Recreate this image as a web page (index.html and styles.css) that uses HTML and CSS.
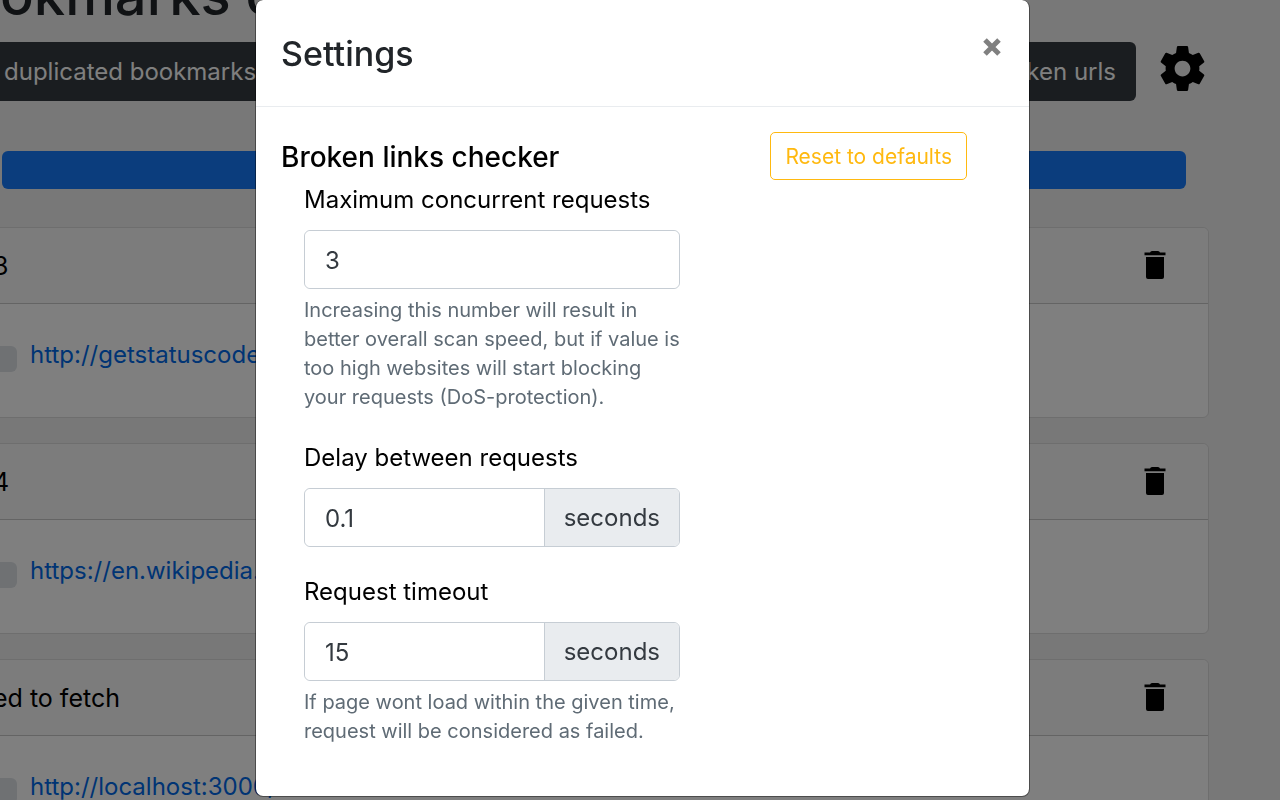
FILE: index.html
```html
<!DOCTYPE html>
<html lang="en">
<head>
<meta charset="utf-8">
<meta name="viewport" content="width=device-width, initial-scale=1">
<title>Settings</title>
<link rel="stylesheet" href="styles.css">
</head>
<body>
<svg class="symbols" aria-hidden="true">
  <symbol id="gear" viewBox="2 2 20 20"><path d="M19.43 12.98c.04-.32.07-.64.07-.98s-.03-.66-.07-.98l2.11-1.65c.19-.15.24-.42.12-.64l-2-3.46c-.12-.22-.39-.3-.61-.22l-2.49 1c-.52-.4-1.08-.73-1.69-.98l-.38-2.65C14.46 2.18 14.25 2 14 2h-4c-.25 0-.46.18-.49.42l-.38 2.65c-.61.25-1.17.59-1.69.98l-2.49-1c-.23-.09-.49 0-.61.22l-2 3.46c-.13.22-.07.49.12.64l2.11 1.65c-.04.32-.07.65-.07.98s.03.66.07.98l-2.11 1.65c-.19.15-.24.42-.12.64l2 3.46c.12.22.39.3.61.22l2.49-1c.52.4 1.08.73 1.69.98l.38 2.65c.03.24.24.42.49.42h4c.25 0 .46-.18.49-.42l.38-2.65c.61-.25 1.17-.59 1.69-.98l2.49 1c.23.09.49 0 .61-.22l2-3.46c.12-.22.07-.49-.12-.64l-2.11-1.65zM12 15.5c-1.93 0-3.5-1.57-3.5-3.5s1.57-3.5 3.5-3.5 3.500 1.570 3.500 3.500-1.570 3.500-3.500 3.500z"/></symbol>
  <symbol id="trash" viewBox="0 0 22 28"><path d="M6 1.500Q6.500 0 8 0H14Q15.500 0 16 1.500H21.500V4.300H.5V1.500zM2 6H20V26Q20 28 18 28H4Q2 28 2 26z"/></symbol>
</svg>
<main class="page">
  <h1 class="page-title">okmarks c</h1>
  <div class="toolbar">
    <div class="actions">
      <button type="button" class="action">duplicated bookmarks</button>
      <button type="button" class="action">broken urls</button>
    </div>
    <button type="button" class="icon-button" aria-label="Settings"><svg class="gear"><use href="#gear"/></svg></button>
  </div>
  <div class="progress" role="progressbar" aria-label="Scan progress" aria-valuenow="100"></div>
  <div class="results">
    <section class="card">
      <header class="card-header"><span>3</span><button type="button" class="icon-button" aria-label="Delete"><svg class="trash"><use href="#trash"/></svg></button></header>
      <div class="card-body"><span class="badge"></span><a class="link" href="#">http://getstatuscode</a></div>
    </section>
    <section class="card">
      <header class="card-header"><span>4</span><button type="button" class="icon-button" aria-label="Delete"><svg class="trash"><use href="#trash"/></svg></button></header>
      <div class="card-body"><span class="badge"></span><a class="link" href="#">https://en.wikipedia.</a></div>
    </section>
    <section class="card">
      <header class="card-header"><span>ed to fetch</span><button type="button" class="icon-button" aria-label="Delete"><svg class="trash"><use href="#trash"/></svg></button></header>
      <div class="card-body"><span class="badge"></span><a class="link" href="#">http://localhost:3000/</a></div>
    </section>
  </div>
</main>
<div class="backdrop">
  <div class="modal" role="dialog" aria-modal="true" aria-labelledby="settings-title">
    <header class="modal-header">
      <h2 class="modal-title" id="settings-title">Settings</h2>
      <button type="button" class="close" aria-label="Close"><svg class="close-icon" viewBox="0 0 18 18"><path d="M2 2 16 16M16 2 2 16"/></svg></button>
    </header>
    <form class="modal-body">
      <div class="fields">
        <h3 class="section-title">Broken links checker</h3>
        <div class="field">
          <label class="label" for="max">Maximum concurrent requests</label>
          <div class="group"><input class="input" id="max" type="text" value="3"></div>
          <p class="help">Increasing this number will result in<br>better overall scan speed, but if value is<br>too high websites will start blocking<br>your requests (DoS-protection).</p>
        </div>
        <div class="field">
          <label class="label" for="delay">Delay between requests</label>
          <div class="group"><input class="input" id="delay" type="text" value="0.1"><span class="unit">seconds</span></div>
        </div>
        <div class="field">
          <label class="label" for="timeout">Request timeout</label>
          <div class="group"><input class="input" id="timeout" type="text" value="15"><span class="unit">seconds</span></div>
          <p class="help">If page wont load within the given time,<br>request will be considered as failed.</p>
        </div>
      </div>
      <button type="button" class="reset">Reset to defaults</button>
    </form>
  </div>
</div>
</body>
</html>
```
FILE: styles.css
```css
* { box-sizing: border-box; }
body {
  margin: 0;
  height: 100vh;
  overflow: hidden;
  background: #f0f0f0;
  color: #000;
  font: 24px/38px Inter, "Liberation Sans", sans-serif;
}
button, input { font: inherit; color: inherit; }
button { border: 0; background: none; padding: 0; }
.symbols { display: none; }
svg { display: block; }

.page { height: 100vh; overflow: hidden; }
.page-title {
  margin: -43px 0 9px;
  color: #212529;
  font-size: 56px;
  line-height: 76px;
  font-weight: 500;
}
.toolbar {
  display: flex;
  align-items: flex-start;
  gap: 24px;
  padding-right: 75px;
}
.actions {
  display: flex;
  flex: 1;
  justify-content: space-between;
  border-radius: 0 6px 6px 0;
  background: #343a40;
}
.action { padding: 11px 20px 10px 4px; color: #fff; }
.toolbar .icon-button { padding-top: 4px; }
.gear { width: 45px; height: 45px; }
.progress {
  height: 38px;
  margin: 50px 94px 38px 2px;
  border-radius: 6px;
  background: #167bfa;
}
.results {
  display: grid;
  gap: 25px;
  margin: 0 71px 0 -8px;
}
.card {
  border: 1px solid #dcdcdc;
  border-radius: 6px;
  background: #fff;
}
.card-header {
  display: flex;
  align-items: center;
  justify-content: space-between;
  height: 76px;
  padding-right: 42px;
  border-bottom: 1px solid #c8c8c8;
  border-radius: 6px 6px 0 0;
  background: #f8f8f8;
  font-size: 25px;
}
.card-header .icon-button { padding-bottom: 2px; }
.trash { width: 22px; height: 28px; }
.card-body {
  display: flex;
  align-items: center;
  gap: 13px;
  height: 113px;
  padding-bottom: 11px;
}
.badge {
  width: 24px;
  height: 26px;
  margin-top: 8px;
  border-radius: 6px;
  background: #dee2e6;
}
.link { color: #0069e8; text-decoration: none; }

.backdrop {
  position: fixed;
  inset: 0;
  background: rgba(0, 0, 0, .5);
}
.modal {
  width: 775px;
  max-width: 80%;
  margin-left: calc(20% - 1px);
  border: 1px solid rgba(0, 0, 0, .4);
  border-top: 0;
  border-radius: 8px;
  background: #fff;
  background-clip: padding-box;
}
.modal-header {
  display: flex;
  align-items: flex-start;
  justify-content: space-between;
  padding: 25px 28px 24px 25px;
  border-bottom: 1px solid #e9ecef;
}
.modal-title {
  margin: 0;
  color: #212529;
  font-size: 34px;
  line-height: 57px;
  font-weight: 500;
}
.close { padding: 13px 0; }
.close-icon {
  width: 18px;
  height: 18px;
  fill: none;
  stroke: #808080;
  stroke-width: 5;
}
.modal-body {
  display: flex;
  align-items: flex-start;
  justify-content: space-between;
  padding: 25px 62px 24px 25px;
}
.fields { flex: 0 1 400px; min-width: 0; }
.section-title {
  margin: 8px 0 7px;
  font-size: 28px;
  line-height: 34px;
  font-weight: 500;
  white-space: nowrap;
}
.field { margin: 0 1px 25px 23px; }
.label { display: block; margin-bottom: 11px; }
.group {
  display: flex;
  border: 1px solid #c6cdd4;
  border-radius: 6px;
}
.field + .field { padding-top: 1px; }
.input {
  flex: 1;
  min-width: 0;
  height: 57px;
  padding: 1px 20px 0;
  border: 0;
  border-radius: 6px;
  background: #fff;
  color: #343a40;
}
.unit {
  padding: 10px 19px 9px;
  border-left: 1px solid #c6cdd4;
  border-radius: 0 5px 5px 0;
  background: #e9ecef;
  color: #343a40;
}
.help {
  margin: 7px 0 0;
  padding-bottom: 1px;
  color: #5f6b75;
  font-size: 20px;
  line-height: 29px;
  white-space: nowrap;
}
.reset {
  flex: none;
  padding: 9px 14px 7px;
  border: 1px solid #ffb910;
  border-radius: 5px;
  color: #ffb910;
  font-size: 21px;
  line-height: 30px;
}
```
